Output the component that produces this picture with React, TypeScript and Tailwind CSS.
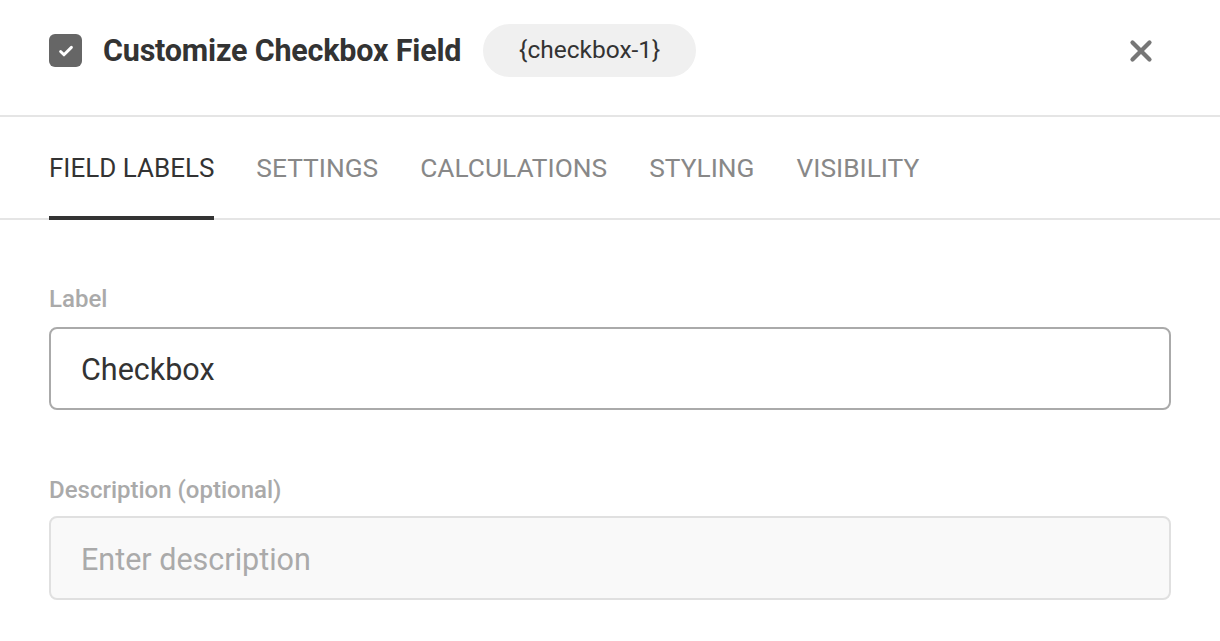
import { X } from 'lucide-react';

const tabs = ['Field Labels', 'Settings', 'Calculations', 'Styling', 'Visibility'];

export default function App() {
  return (
    <div className="min-h-screen bg-white font-['Roboto',sans-serif] text-[#333]">
      {/* header */}
      <div className="flex h-[117px] items-center border-b-2 border-[#e5e5e5] pl-[49px] pr-[62px] pb-[14px]">
        <div className="flex h-[33px] w-[33px] items-center justify-center rounded-[6px] bg-[#666]">
          <svg width="18" height="18" viewBox="0 0 16 16" fill="none">
            <path d="M3.2 8.4l3 3 6.6-6.6" stroke="white" strokeWidth="2.6" strokeLinecap="round" strokeLinejoin="round" />
          </svg>
        </div>
        <h1 className="ml-[21px] text-[30.5px] font-bold tracking-[-0.2px] text-[#333]">Customize Checkbox Field</h1>
        <span className="ml-[22px] flex h-[53px] w-[213px] items-center justify-center rounded-full bg-[#f0f0f0] text-[24.5px]">
          {'{checkbox-1}'}
        </span>
        <button className="ml-auto text-[#777]">
          <X size={34} strokeWidth={3} />
        </button>
      </div>

      {/* tabs */}
      <div className="flex gap-[42px] border-b-2 border-[#e5e5e5] px-[49px]">
        {tabs.map((tab, i) => (
          <div
            key={tab}
            className={
              i === 0
                ? '-mb-[2px] flex h-[103px] items-center border-b-4 border-[#333] pt-[4px] text-[26px] uppercase text-[#333]'
                : '-mb-[2px] flex h-[103px] items-center border-b-4 border-transparent pt-[4px] text-[26.3px] uppercase text-[#888]'
            }
          >
            {tab}
          </div>
        ))}
      </div>

      {/* form */}
      <div className="px-[49px] pt-[67px]">
        <label className="block text-[24px] font-medium leading-6 text-[#aaa]">Label</label>
        <div className="mt-[16px] flex h-[83px] items-center rounded-[8px] border-2 border-[#aaa] px-[30px] pt-[3px] text-[30.5px] text-[#333]">
          Checkbox
        </div>

        <label className="mt-[68px] block text-[24px] font-medium leading-6 text-[#aaa]">Description (optional)</label>
        <div className="mt-[14px] flex h-[84px] items-center rounded-[8px] border-2 border-[#e0e0e0] bg-[#f9f9f9] px-[30px] pt-[3px] text-[30.5px] text-[#aaa]">
          Enter description
        </div>
      </div>
    </div>
  );
}
